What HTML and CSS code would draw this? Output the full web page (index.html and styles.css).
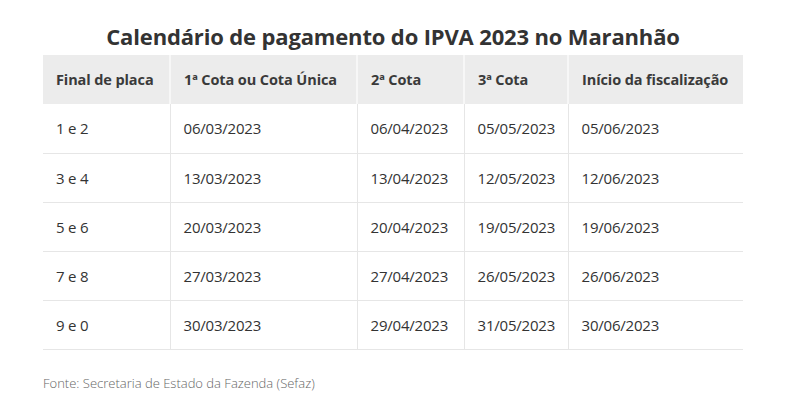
FILE: index.html
```html
<!DOCTYPE html>
<html lang="pt-BR">
<head>
<meta charset="utf-8">
<title>Calendário IPVA 2023 Maranhão</title>
<link rel="stylesheet" href="styles.css">
</head>
<body>
<main class="page">
  <h1 class="title">Calendário de pagamento do IPVA 2023 no Maranhão</h1>
  <table class="cal">
    <colgroup>
      <col class="c1"><col class="c2"><col class="c3"><col class="c4"><col class="c5">
    </colgroup>
    <thead>
      <tr>
        <th>Final de placa</th>
        <th>1ª Cota ou Cota Única</th>
        <th>2ª Cota</th>
        <th>3ª Cota</th>
        <th>Início da fiscalização</th>
      </tr>
    </thead>
    <tbody>
      <tr><td>1 e 2</td><td>06/03/2023</td><td>06/04/2023</td><td>05/05/2023</td><td>05/06/2023</td></tr>
      <tr><td>3 e 4</td><td>13/03/2023</td><td>13/04/2023</td><td>12/05/2023</td><td>12/06/2023</td></tr>
      <tr><td>5 e 6</td><td>20/03/2023</td><td>20/04/2023</td><td>19/05/2023</td><td>19/06/2023</td></tr>
      <tr><td>7 e 8</td><td>27/03/2023</td><td>27/04/2023</td><td>26/05/2023</td><td>26/06/2023</td></tr>
      <tr><td>9 e 0</td><td>30/03/2023</td><td>29/04/2023</td><td>31/05/2023</td><td>30/06/2023</td></tr>
    </tbody>
  </table>
  <p class="source">Fonte: Secretaria de Estado da Fazenda (Sefaz)</p>
</main>
</body>
</html>
```
FILE: styles.css
```css
* { box-sizing: border-box; }
html, body { margin: 0; padding: 0; background: #fff; }
body {
  font-family: "Open Sans", "Noto Sans", sans-serif;
  color: #333;
  width: 800px;
  height: 415px;
  overflow: hidden;
}
.page {
  padding: 20px 0 0 43px;
}
.title {
  margin: 0 0 2px;
  width: 700px;
  text-align: center;
  font-size: 22px;
  font-weight: 700;
  line-height: 33px;
  color: #333;
  letter-spacing: -0.15px;
}
.cal {
  width: 700px;
  border-collapse: collapse;
  table-layout: fixed;
  font-size: 15px;
}
.c1 { width: 127px; }
.c2 { width: 187px; }
.c3 { width: 107px; }
.c4 { width: 104px; }
.c5 { width: 175px; }
.cal th, .cal td {
  text-align: left;
  padding: 0 0 0 13px;
  height: 49px;
  border-left: 1px solid #e6e6e6;
  border-bottom: 1px solid #e6e6e6;
  white-space: nowrap;
}
.cal th:first-child, .cal td:first-child { border-left: none; }
.cal th {
  background: #ececec;
  font-size: 14.5px;
  font-weight: 700;
  color: #3a3a3a;
  border-bottom: none;
  border-left: 2px solid #f7f7f7;
  letter-spacing: -0.1px;
}
.cal td {
  font-weight: 400;
  color: #333;
  letter-spacing: -0.2px;
}
.source {
  margin: 24px 0 0;
  font-size: 13px;
  font-weight: 300;
  color: #666;
  letter-spacing: 0;
}
```
